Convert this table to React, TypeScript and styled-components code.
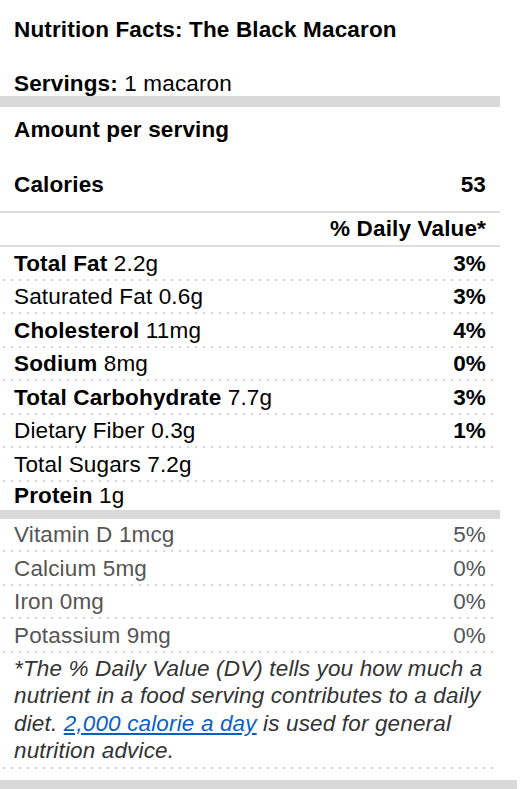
import React from "react";
import styled, { createGlobalStyle } from "styled-components";

const GlobalStyle = createGlobalStyle`
  body {
    margin: 0;
    background: #fff;
    font-family: "Liberation Sans", Arial, sans-serif;
    color: #000;
  }
`;

const Page = styled.div`
  width: 517px;
`;

const Panel = styled.div`
  width: 500px;
  font-size: 22.5px;
  letter-spacing: 0.15px;
`;

const Title = styled.h1`
  margin: 0;
  padding: 18px 14px 0;
  font-size: 22.5px;
  line-height: 24px;
  font-weight: bold;
`;

const Servings = styled.div`
  padding: 30px 14px 0;
  line-height: 24px;
`;

const HeavyBar = styled.div<{ $h: number }>`
  height: ${(p) => p.$h}px;
  background: #d9d9d9;
`;

const ThinLine = styled.div`
  height: 2px;
  background: #dedede;
`;

const Amount = styled.div`
  padding: 11px 14px 0;
  line-height: 24px;
  font-weight: bold;
`;

const CaloriesRow = styled.div`
  display: flex;
  justify-content: space-between;
  padding: 31px 14px 14px;
  line-height: 24px;
  font-weight: bold;
`;

const DvRow = styled.div`
  display: flex;
  justify-content: flex-end;
  align-items: center;
  height: 32px;
  padding: 0 14px;
  font-weight: bold;
`;

const dots = `
  content: "";
  position: absolute;
  left: 0;
  bottom: 0;
  width: 494px;
  height: 2px;
  background-image: linear-gradient(to right, #d4d4d4 2px, transparent 2px);
  background-size: 8px 2px;
  background-position: 3px 0;
  background-repeat: repeat-x;
`;

const Row = styled.div<{ $dotted?: boolean; $muted?: boolean; $h?: number }>`
  position: relative;
  display: flex;
  justify-content: space-between;
  align-items: center;
  height: ${(p) => p.$h ?? 33.5}px;
  padding: 0 14px;
  color: ${(p) => (p.$muted ? "#555" : "#000")};

  ${(p) => p.$dotted && `&::after { ${dots} }`}
`;

const Strong = styled.b`
  font-weight: bold;
`;

const Percent = styled.span<{ $bold?: boolean }>`
  font-weight: ${(p) => (p.$bold ? "bold" : "normal")};
`;

const Footnote = styled.p`
  position: relative;
  margin: 0;
  padding: 2px 6px 4px 14px;
  line-height: 27.5px;
  font-style: italic;
  color: #333;

  &::after {
    ${dots}
  }
`;

const Link = styled.a`
  color: #0b5fc4;
  text-decoration: underline;
`;

const BottomBar = styled.div`
  margin-top: 11px;
  height: 10px;
  background: #d9d9d9;
`;

type Nutrient = {
  name: string;
  amount: string;
  dv?: string;
  bold?: boolean;
};

const nutrients: Nutrient[] = [
  { name: "Total Fat", amount: "2.2g", dv: "3%", bold: true },
  { name: "Saturated Fat", amount: "0.6g", dv: "3%" },
  { name: "Cholesterol", amount: "11mg", dv: "4%", bold: true },
  { name: "Sodium", amount: "8mg", dv: "0%", bold: true },
  { name: "Total Carbohydrate", amount: "7.7g", dv: "3%", bold: true },
  { name: "Dietary Fiber", amount: "0.3g", dv: "1%" },
  { name: "Total Sugars", amount: "7.2g" },
];

const vitamins: Nutrient[] = [
  { name: "Vitamin D", amount: "1mcg", dv: "5%" },
  { name: "Calcium", amount: "5mg", dv: "0%" },
  { name: "Iron", amount: "0mg", dv: "0%" },
  { name: "Potassium", amount: "9mg", dv: "0%" },
];

const App = () => {
  return (
    <Page>
      <GlobalStyle />
      <Panel>
        <Title>Nutrition Facts: The Black Macaron</Title>
        <Servings>
          <Strong>Servings:</Strong> 1 macaron
        </Servings>
        <HeavyBar $h={11} />
        <Amount>Amount per serving</Amount>
        <CaloriesRow>
          <span>Calories</span>
          <span>53</span>
        </CaloriesRow>
        <ThinLine />
        <DvRow>% Daily Value*</DvRow>
        <ThinLine />
        {nutrients.map((n) => (
          <Row key={n.name} $dotted>
            <span>
              {n.bold ? <Strong>{n.name}</Strong> : n.name} {n.amount}
            </span>
            {n.dv && <Percent $bold>{n.dv}</Percent>}
          </Row>
        ))}
        <Row $h={28}>
          <span>
            <Strong>Protein</Strong> 1g
          </span>
        </Row>
        <HeavyBar $h={9} />
        {vitamins.map((v) => (
          <Row key={v.name} $dotted $muted>
            <span>
              {v.name} {v.amount}
            </span>
            <Percent>{v.dv}</Percent>
          </Row>
        ))}
        <Footnote>
          *The % Daily Value (DV) tells you how much a nutrient in a food
          serving contributes to a daily diet.{" "}
          <Link href="#">2,000 calorie a day</Link> is used for general
          nutrition advice.
        </Footnote>
      </Panel>
      <BottomBar />
    </Page>
  );
};

export default App;
